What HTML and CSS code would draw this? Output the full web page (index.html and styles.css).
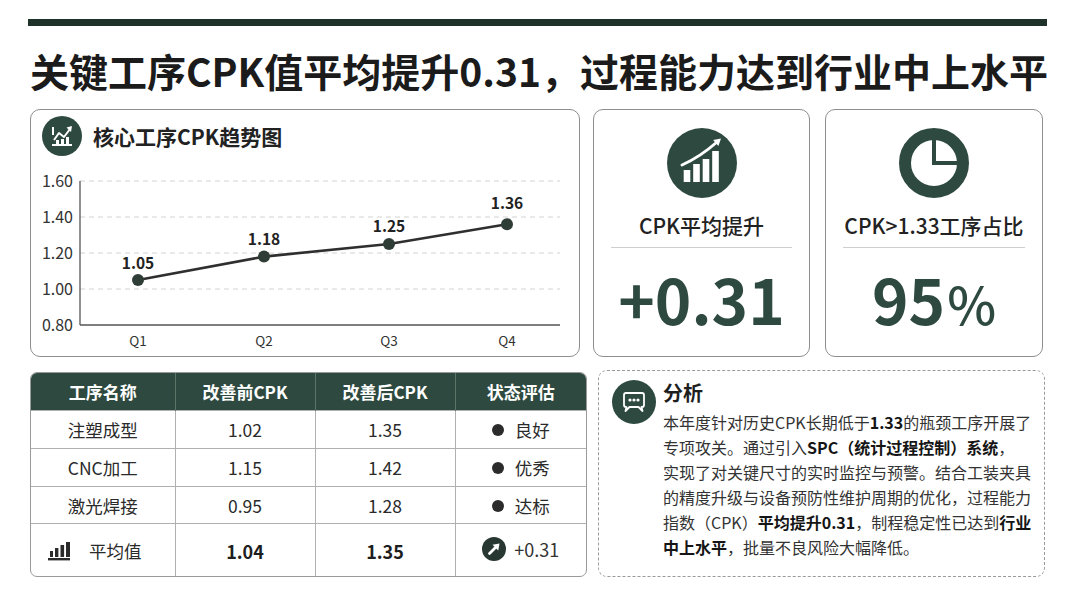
FILE: index.html
```html
<!DOCTYPE html>
<html lang="zh">
<head>
<meta charset="utf-8">
<title>CPK</title>
<link rel="stylesheet" href="styles.css">
</head>
<body>
<div class="page">
  <div class="topbar"></div>
  <h1 class="title">关键工序CPK值平均提升0.31，过程能力达到行业中上水平</h1>

  <div class="row-top">
    <section class="card chart-card">
      <div class="card-head">
        <span class="icon-sm">
          <svg viewBox="0 0 40 40" width="40" height="40">
            <circle cx="20" cy="20" r="20" fill="#2e4a40"/>
            <line x1="11" y1="11" x2="11" y2="19" stroke="#fff" stroke-width="2"/>
            <polyline points="12,24 17,17 22,21 28,13" fill="none" stroke="#fff" stroke-width="2" stroke-linejoin="round"/>
            <polygon points="30,10 24.5,11.5 29,16" fill="#fff"/>
            <rect x="14" y="24" width="3" height="4" fill="#fff"/>
            <rect x="19" y="23" width="3" height="5" fill="#fff"/>
            <rect x="24" y="21" width="3" height="7" fill="#fff"/>
            <line x1="10" y1="29" x2="30" y2="29" stroke="#fff" stroke-width="2"/>
          </svg>
        </span>
        <h2>核心工序CPK趋势图</h2>
      </div>
      <svg class="chart" viewBox="0 0 548 188" width="548" height="188">
        <g class="grid">
          <line x1="49" y1="14" x2="529" y2="14"/>
          <line x1="49" y1="50" x2="529" y2="50"/>
          <line x1="49" y1="86" x2="529" y2="86"/>
          <line x1="49" y1="122" x2="529" y2="122"/>
        </g>
        <line class="axis" x1="49" y1="14" x2="49" y2="158"/>
        <line class="axis" x1="49" y1="158" x2="529" y2="158"/>
        <g class="ylab">
          <text x="42" y="19.5">1.60</text>
          <text x="42" y="55.5">1.40</text>
          <text x="42" y="91.5">1.20</text>
          <text x="42" y="127.5">1.00</text>
          <text x="42" y="163.5">0.80</text>
        </g>
        <g class="xlab">
          <text x="107" y="179">Q1</text>
          <text x="233" y="179">Q2</text>
          <text x="358" y="179">Q3</text>
          <text x="476" y="179">Q4</text>
        </g>
        <polyline class="line" points="107,113 233,89.6 358,77 476,57.2"/>
        <g class="pts">
          <circle cx="107" cy="113" r="6"/>
          <circle cx="233" cy="89.6" r="6"/>
          <circle cx="358" cy="77" r="6"/>
          <circle cx="476" cy="57.2" r="6"/>
        </g>
        <g class="vlab">
          <text x="107" y="102">1.05</text>
          <text x="233" y="78">1.18</text>
          <text x="358" y="65">1.25</text>
          <text x="476" y="42">1.36</text>
        </g>
      </svg>
    </section>

    <section class="card kpi kpi-1">
      <svg class="kpi-icon" viewBox="0 0 70 70" width="70" height="70">
        <circle cx="35" cy="35" r="35" fill="#2e4a40"/>
        <rect x="16.7" y="42" width="6.6" height="12" fill="#fff"/>
        <rect x="26.2" y="36" width="6.6" height="18" fill="#fff"/>
        <rect x="35.7" y="31" width="6.6" height="23" fill="#fff"/>
        <rect x="45.2" y="23" width="6.6" height="31" fill="#fff"/>
        <path d="M15 37 Q33 29 50 14" fill="none" stroke="#fff" stroke-width="3" stroke-linecap="round"/>
        <polygon points="54,10.5 51.4,18.1 46.1,12.1" fill="#fff"/>
      </svg>
      <div class="kpi-label">CPK平均提升</div>
      <div class="kpi-line"></div>
      <div class="kpi-value">+0.31</div>
    </section>

    <section class="card kpi kpi-2">
      <svg class="kpi-icon" viewBox="0 0 70 70" width="70" height="70">
        <circle cx="35" cy="35" r="29" fill="none" stroke="#2e4a40" stroke-width="12"/>
        <path d="M35 12 V35 H58" fill="none" stroke="#2e4a40" stroke-width="4"/>
      </svg>
      <div class="kpi-label">CPK&gt;1.33工序占比</div>
      <div class="kpi-line"></div>
      <div class="kpi-value">95<span class="pct">%</span></div>
    </section>
  </div>

  <div class="row-bottom">
    <div class="table-wrap">
      <table class="cpk-table">
        <colgroup>
          <col class="c1"><col class="c2"><col class="c3"><col class="c4">
        </colgroup>
        <thead>
          <tr><th>工序名称</th><th>改善前CPK</th><th>改善后CPK</th><th>状态评估</th></tr>
        </thead>
        <tbody>
          <tr class="r1"><td>注塑成型</td><td>1.02</td><td>1.35</td><td><span class="dot"></span>良好</td></tr>
          <tr class="r2"><td>CNC加工</td><td>1.15</td><td>1.42</td><td><span class="dot"></span>优秀</td></tr>
          <tr class="r3"><td>激光焊接</td><td>0.95</td><td>1.28</td><td><span class="dot"></span>达标</td></tr>
          <tr class="avg">
            <td class="avg-name">
              <div class="avg-label">
                <svg viewBox="0 0 24 20" width="24" height="20">
                  <rect x="1" y="17" width="22" height="2.4" fill="#2a2a2a"/>
                  <rect x="3" y="10" width="3" height="6" fill="#2a2a2a"/>
                  <rect x="8" y="7" width="3.4" height="9" fill="#2a2a2a"/>
                  <rect x="13.5" y="4" width="3.6" height="12" fill="#2a2a2a"/>
                  <rect x="19" y="1" width="4" height="15" fill="#2a2a2a"/>
                </svg>
                <span>平均值</span>
              </div>
            </td>
            <td class="strong">1.04</td>
            <td class="strong">1.35</td>
            <td>
              <span class="up">
                <svg viewBox="0 0 24 24" width="24" height="24">
                  <circle cx="12" cy="12" r="12" fill="#283731"/>
                  <line x1="7.5" y1="16.5" x2="14.5" y2="9.5" stroke="#fff" stroke-width="2.8" stroke-linecap="round"/>
                  <polygon points="17.5,6.5 10.5,7.8 16.2,13.5" fill="#fff"/>
                </svg>
                <span>+0.31</span>
              </span>
            </td>
          </tr>
        </tbody>
      </table>
    </div>

    <section class="analysis">
      <span class="icon-chat">
        <svg viewBox="0 0 44 44" width="44" height="44">
          <circle cx="22" cy="22" r="22" fill="#2e4a40"/>
          <path d="M14 13 H30 Q32 13 32 15 V25 Q32 27 30 27 H29.5 L30.5 31 L26.5 27 H17.5 L13.5 31 L14.5 27 H14 Q12 27 12 25 V15 Q12 13 14 13 Z" fill="none" stroke="#fff" stroke-width="1.8" stroke-linejoin="round"/>
          <circle cx="18" cy="20" r="1.6" fill="#fff"/>
          <circle cx="22" cy="20" r="1.6" fill="#fff"/>
          <circle cx="26" cy="20" r="1.6" fill="#fff"/>
        </svg>
      </span>
      <div class="analysis-text">
        <h3>分析</h3>
        <p>本年度针对历史CPK长期低于<b>1.33</b>的瓶颈工序开展了<br>专项攻关。通过引入<b>SPC（统计过程控制）系统</b>，<br>实现了对关键尺寸的实时监控与预警。结合工装夹具<br>的精度升级与设备预防性维护周期的优化，过程能力<br>指数（CPK）<b>平均提升0.31</b>，制程稳定性已达到<b>行业</b><br><b>中上水平</b>，批量不良风险大幅降低。</p>
      </div>
    </section>
  </div>
</div>
</body>
</html>
```

FILE: styles.css
```css
html, body {
  margin: 0;
  padding: 0;
  background: #ffffff;
}
body {
  font-family: "Noto Sans CJK SC", "Noto Sans", sans-serif;
  color: #222;
}
.page {
  width: 1080px;
  height: 608px;
  box-sizing: border-box;
  padding: 19px 0 0 28px;
  overflow: hidden;
}
.topbar {
  width: 1019px;
  height: 7px;
  background: #1e322a;
}
.title {
  margin: 16px 0 11px 2px;
  font-size: 39px;
  line-height: 56px;
  font-weight: 700;
  color: #1b1b1b;
  white-space: nowrap;
}
.row-top {
  display: flex;
  margin-left: 2px;
  height: 248px;
}
.card {
  box-sizing: border-box;
  border: 1px solid #8e8e8e;
  border-radius: 10px;
  background: #fff;
}
.chart-card {
  width: 550px;
  height: 248px;
}
.card-head {
  display: flex;
  align-items: center;
  gap: 11px;
  padding: 6px 0 0 11px;
}
.icon-sm {
  display: block;
  width: 40px;
  height: 40px;
}
.icon-sm svg { display: block; }
.card-head h2 {
  margin: 0;
  font-size: 21px;
  line-height: 26px;
  font-weight: 700;
  color: #222;
}
.chart {
  display: block;
  margin-top: 11px;
}
.chart .grid line {
  stroke: #d2d2d2;
  stroke-width: 1;
  stroke-dasharray: 5 4;
}
.chart .axis {
  stroke: #555;
  stroke-width: 1.3;
}
.chart .ylab text {
  font-size: 16px;
  fill: #333;
  text-anchor: end;
}
.chart .xlab text {
  font-size: 13.5px;
  fill: #333;
  text-anchor: middle;
}
.chart .line {
  fill: none;
  stroke: #2f2f2f;
  stroke-width: 2.6;
}
.chart .pts circle {
  fill: #2f3d37;
}
.chart .vlab text {
  font-size: 15.5px;
  font-weight: 700;
  fill: #222;
  text-anchor: middle;
}
.kpi {
  display: flex;
  flex-direction: column;
  align-items: center;
  padding-top: 18px;
  height: 248px;
}
.kpi-1 {
  width: 217px;
  margin-left: 13px;
}
.kpi-2 {
  width: 218px;
  margin-left: 15px;
}
.kpi-icon { display: block; }
.kpi-label {
  margin-top: 14px;
  font-size: 21px;
  line-height: 26px;
  font-weight: 500;
  color: #222;
  white-space: nowrap;
}
.kpi-line {
  align-self: stretch;
  height: 1px;
  margin: 9px 17px 0;
  background: #cfcfcf;
}
.kpi-value {
  margin-top: 15px;
  font-size: 62px;
  line-height: 70px;
  font-weight: 700;
  color: #2e4a40;
  white-space: nowrap;
}
.kpi-value .pct {
  font-size: 0.84em;
  font-weight: 500;
  margin-left: 2px;
}
.row-bottom {
  display: flex;
  align-items: flex-start;
  margin-top: 13px;
  margin-left: 2px;
}
.table-wrap {
  box-sizing: border-box;
  width: 557px;
  height: 205px;
  margin-top: 2px;
  border: 1px solid #9a9a9a;
  border-radius: 7px;
  overflow: hidden;
}
.cpk-table {
  width: 100%;
  border-collapse: collapse;
  table-layout: fixed;
}
.cpk-table col.c1 { width: 144px; }
.cpk-table col.c2 { width: 140px; }
.cpk-table col.c3 { width: 140px; }
.cpk-table col.c4 { width: 131px; }
.cpk-table th {
  height: 37px;
  padding: 0;
  background: #2e4a40;
  color: #fff;
  font-size: 17px;
  font-weight: 700;
  text-align: center;
  border-left: 1px solid #5d7469;
}
.cpk-table th:first-child { border-left: none; }
.cpk-table td {
  padding: 0;
  text-align: center;
  font-size: 17.5px;
  color: #2a2a2a;
  border-top: 1px solid #b0b0b0;
  border-left: 1px solid #b0b0b0;
  white-space: nowrap;
}
.cpk-table td:first-child { border-left: none; }
.cpk-table tr.r1 td,
.cpk-table tr.r2 td { height: 37px; }
.cpk-table tr.r3 td { height: 36px; }
.cpk-table tr.avg td { height: 53px; }
.dot {
  display: inline-block;
  width: 12px;
  height: 12px;
  border-radius: 50%;
  background: #2b2b2b;
  margin-right: 11px;
  vertical-align: 1px;
}
.avg-label {
  display: flex;
  align-items: center;
  gap: 18px;
  padding-left: 16px;
  font-size: 17.5px;
}
.avg-label svg { display: block; }
.cpk-table td.strong {
  font-size: 18px;
  font-weight: 600;
  color: #1e1e1e;
}
.up {
  display: inline-flex;
  align-items: center;
  gap: 8px;
  font-size: 18px;
  color: #333;
}
.up svg { display: block; }
.analysis {
  box-sizing: border-box;
  width: 447px;
  height: 207px;
  margin-left: 11px;
  border: 1.5px dashed #9a9a9a;
  border-radius: 9px;
  display: flex;
  gap: 7px;
  padding: 9px 10px 0 13px;
}
.icon-chat {
  display: block;
  width: 44px;
  height: 44px;
  flex: none;
}
.icon-chat svg { display: block; }
.analysis-text h3 {
  margin: 0;
  font-size: 20px;
  line-height: 26px;
  font-weight: 700;
  color: #1e1e1e;
}
.analysis-text p {
  margin: 4px 0 0;
  font-size: 16px;
  line-height: 25px;
  color: #333;
  white-space: nowrap;
}
.analysis-text b {
  font-weight: 700;
  color: #151515;
}
```
